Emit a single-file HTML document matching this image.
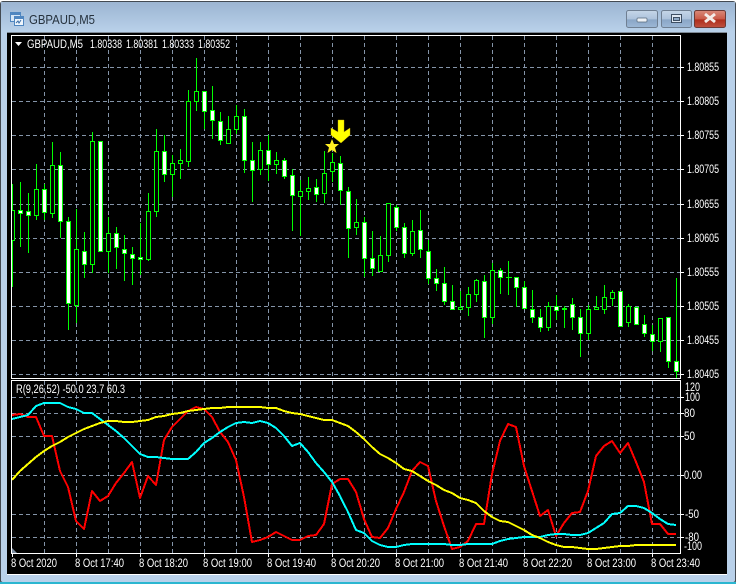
<!DOCTYPE html>
<html><head><meta charset="utf-8"><title>GBPAUD,M5</title>
<style>
html,body{margin:0;padding:0;width:738px;height:584px;overflow:hidden;background:#fff}
svg{display:block}
text{font-family:"Liberation Sans",sans-serif;font-size:11.5px;fill:#fff}
</style></head><body>
<svg width="738" height="584" viewBox="0 0 738 584" xmlns="http://www.w3.org/2000/svg">
<defs>
<linearGradient id="t" x1="0" y1="0" x2="0" y2="1"><stop offset="0" stop-color="#9cb5d2"/><stop offset="1" stop-color="#b9d1ea"/></linearGradient>
<linearGradient id="b" x1="0" y1="0" x2="0" y2="1"><stop offset="0" stop-color="#c6d6e8"/><stop offset=".5" stop-color="#adc3dc"/><stop offset=".55" stop-color="#8aa6c6"/><stop offset="1" stop-color="#9db8d6"/></linearGradient>
<linearGradient id="r" x1="0" y1="0" x2="0" y2="1"><stop offset="0" stop-color="#d98a7a"/><stop offset=".5" stop-color="#c95a48"/><stop offset=".55" stop-color="#ae2e1c"/><stop offset="1" stop-color="#bf5140"/></linearGradient>
<clipPath id="m"><rect x="12" y="36" width="668" height="342"/></clipPath>
<clipPath id="s"><rect x="12" y="381" width="668" height="172"/></clipPath>
</defs>
<rect width="738" height="584" fill="#fff"/>
<!-- window frame -->
<rect x="0" y="1" width="736" height="583" rx="3" fill="#434a52"/>
<rect x="1" y="2" width="734" height="580" rx="2" fill="#b9d1ea"/>
<rect x="1" y="2" width="734" height="30" fill="url(#t)"/>
<rect x="0" y="582" width="738" height="2" fill="#2bb6d0"/>
<rect x="736" y="0" width="2" height="584" fill="#fff"/>
<rect x="7" y="32" width="720" height="1" fill="#7f8a96"/>
<!-- title -->
<g shape-rendering="crispEdges">
<rect x="10.5" y="12.5" width="10" height="9" fill="#d6e6f6" stroke="#4f86c0"/>
<rect x="11" y="13" width="9" height="2" fill="#4f86c0"/>
<rect x="14.5" y="16.5" width="9" height="9" fill="#eef5fc" stroke="#4f86c0"/>
<rect x="15" y="17" width="8" height="2" fill="#4f86c0"/>
</g>
<path d="M16 23l2-2 1 2 2-3" fill="none" stroke="#3a6ea8" stroke-width="1"/>
<text x="29" y="24" textLength="66" lengthAdjust="spacingAndGlyphs" style="font-size:13px;fill:#26323e">GBPAUD,M5</text>
<!-- buttons -->
<rect x="626.5" y="10.5" width="31" height="17" rx="2" fill="url(#b)" stroke="#6f7f92"/>
<rect x="661.5" y="10.5" width="30" height="17" rx="2" fill="url(#b)" stroke="#6f7f92"/>
<rect x="694.5" y="10.5" width="31" height="17" rx="2" fill="url(#r)" stroke="#6b3a36"/>
<rect x="637" y="18" width="10" height="4" rx="1" fill="#eef2f6" stroke="#56687c" stroke-width=".7"/>
<rect x="671.5" y="14.5" width="10" height="8" fill="#dfe8f2" stroke="#3e4f63" stroke-width="1"/>
<rect x="673.5" y="17.5" width="6" height="3" fill="#8fa9c6" stroke="#3e4f63" stroke-width="1"/>
<path d="M705 14l10 8M715 14l-10 8" stroke="#f3ece8" stroke-width="3" fill="none"/>
<!-- chart -->
<rect x="7" y="33" width="720" height="541" fill="#000"/>
<rect x="7" y="574" width="720" height="1" fill="#fff"/>
<g shape-rendering="crispEdges">
<path d="M11.5 35V379M11 35.5H681M680.5 35V378M11 378.5H681M11 380.5H681M11.5 380V554M680.5 380V554M11 553.5H681" stroke="#fff" fill="none"/>
<!-- grid -->
<g stroke="#8494a8" stroke-dasharray="4 3" fill="none">
<path d="M12 67.5H680M12 101.5H680M12 135.5H680M12 169.5H680M12 204.5H680M12 238.5H680M12 272.5H680M12 306.5H680M12 340.5H680M12 374.5H680"/>
<path d="M12 397.5H680M12 413.5H680M12 436.5H680M12 475.5H680M12 514.5H680M12 537.5H680"/>
<path d="M44.5 36V378M76.5 36V378M108.5 36V378M140.5 36V378M172.5 36V378M204.5 36V378M236.5 36V378M268.5 36V378M300.5 36V378M332.5 36V378M364.5 36V378M396.5 36V378M428.5 36V378M460.5 36V378M492.5 36V378M524.5 36V378M556.5 36V378M588.5 36V378M620.5 36V378M652.5 36V378"/>
<path d="M44.5 381V553M76.5 381V553M108.5 381V553M140.5 381V553M172.5 381V553M204.5 381V553M236.5 381V553M268.5 381V553M300.5 381V553M332.5 381V553M364.5 381V553M396.5 381V553M428.5 381V553M460.5 381V553M492.5 381V553M524.5 381V553M556.5 381V553M588.5 381V553M620.5 381V553M652.5 381V553"/>
</g>
<!-- axis ticks -->
<path stroke="#fff" fill="none" d="M681 67.5h3M681 101.5h3M681 135.5h3M681 169.5h3M681 204.5h3M681 238.5h3M681 272.5h3M681 306.5h3M681 340.5h3M681 374.5h3M681 397.5h3M681 413.5h3M681 436.5h3M681 475.5h3M681 514.5h3M681 537.5h3M12.5 554v3M76.5 554v3M140.5 554v3M204.5 554v3M268.5 554v3M332.5 554v3M396.5 554v3M460.5 554v3M524.5 554v3M588.5 554v3M652.5 554v3"/>
<g clip-path="url(#m)">
<!-- wicks -->
<path stroke="#00ff00" fill="none" d="M12.5 184V287M20.5 182V247M28.5 193V253M36.5 164V220M44.5 184V220M52.5 142V218M60.5 152V238M68.5 217V330M76.5 209V323M84.5 232V278M92.5 132V273M100.5 141V251M108.5 217V273M116.5 227V269M124.5 235V281M132.5 247V285M140.5 223V275M148.5 193V261M156.5 129V217M164.5 135V182M172.5 155V197M180.5 149V179M188.5 90V167M196.5 58V111M204.5 91V129M212.5 86V139M220.5 112V145M228.5 116V143M236.5 105V134M244.5 109V173M252.5 142V202M260.5 142V175M268.5 135V181M276.5 152V174M284.5 158V179M292.5 169V231M300.5 180V236M308.5 177V200M316.5 179V202M324.5 151V203M332.5 153V182M340.5 156V205M348.5 187V258M356.5 199V235M364.5 217V277M372.5 231V276M380.5 236V271M388.5 203V262M396.5 205V231M404.5 223V258M412.5 220V256M420.5 210V258M428.5 240V284M436.5 269V291M444.5 267V305M452.5 285V310M460.5 291V309M468.5 287V316M476.5 279V302M484.5 275V338M492.5 263V324M500.5 268V294M508.5 261V295M516.5 277V307M524.5 281V309M532.5 290V323M540.5 309V332M548.5 302V331M556.5 295V320M564.5 306V328M572.5 298V330M580.5 309V357M588.5 305V340M596.5 296V309M604.5 285V314M612.5 290V306M620.5 291V326M628.5 304V327M636.5 307V325M644.5 315V337M652.5 325V351M660.5 318V352M668.5 317V368M676.5 278V378"/>
<!-- hollow bodies -->
<path stroke="#00ff00" fill="#000" d="M10.5 210.5h4v30h-4zM34.5 189.5h4v26h-4zM50.5 165.5h4v48h-4zM74.5 249.5h4v56h-4zM90.5 141.5h4v123h-4zM106.5 233.5h4v18h-4zM146.5 211.5h4v48h-4zM154.5 151.5h4v60h-4zM170.5 163.5h4v11h-4zM178.5 160.5h4v3h-4zM186.5 101.5h4v60h-4zM194.5 91.5h4v10h-4zM226.5 129.5h4v14h-4zM234.5 116.5h4v13h-4zM258.5 150.5h4v19h-4zM274.5 160.5h4v4h-4zM298.5 191.5h4v5h-4zM306.5 188.5h4v3h-4zM322.5 173.5h4v20h-4zM330.5 162.5h4v9h-4zM354.5 222.5h4v5h-4zM378.5 255.5h4v16h-4zM386.5 203.5h4v52h-4zM410.5 231.5h4v22h-4zM458.5 307.5h4v2h-4zM466.5 294.5h4v13h-4zM474.5 280.5h4v14h-4zM490.5 270.5h4v47h-4zM546.5 306.5h4v21h-4zM586.5 309.5h4v24h-4zM594.5 307.5h4v2h-4zM602.5 297.5h4v12h-4zM610.5 292.5h4v6h-4zM626.5 306.5h4v16h-4zM658.5 318.5h4v23h-4z"/>
<!-- filled bodies -->
<path stroke="#00ff00" fill="#fff" d="M18.5 210.5h4v3h-4zM26.5 211.5h4v4h-4zM42.5 189.5h4v23h-4zM58.5 165.5h4v56h-4zM66.5 221.5h4v82h-4zM82.5 251.5h4v13h-4zM98.5 141.5h4v110h-4zM114.5 233.5h4v14h-4zM122.5 249.5h4v4h-4zM130.5 254.5h4v4h-4zM138.5 257.5h4v2h-4zM162.5 151.5h4v23h-4zM202.5 91.5h4v20h-4zM210.5 110.5h4v10h-4zM218.5 121.5h4v19h-4zM242.5 116.5h4v44h-4zM250.5 160.5h4v10h-4zM266.5 150.5h4v14h-4zM282.5 160.5h4v16h-4zM290.5 175.5h4v20h-4zM314.5 187.5h4v7h-4zM338.5 163.5h4v27h-4zM346.5 191.5h4v37h-4zM362.5 222.5h4v36h-4zM370.5 258.5h4v10h-4zM394.5 207.5h4v20h-4zM402.5 227.5h4v26h-4zM418.5 230.5h4v19h-4zM426.5 251.5h4v27h-4zM434.5 278.5h4v5h-4zM442.5 283.5h4v18h-4zM450.5 301.5h4v8h-4zM482.5 281.5h4v36h-4zM498.5 270.5h4v7h-4zM514.5 277.5h4v10h-4zM522.5 287.5h4v21h-4zM530.5 309.5h4v8h-4zM538.5 317.5h4v10h-4zM554.5 306.5h4v4h-4zM562.5 308.5h4v1h-4zM570.5 304.5h4v13h-4zM578.5 317.5h4v16h-4zM618.5 291.5h4v35h-4zM634.5 307.5h4v17h-4zM642.5 324.5h4v9h-4zM650.5 334.5h4v7h-4zM666.5 317.5h4v44h-4zM674.5 361.5h4v10h-4z"/>
<path stroke="#00ff00" d="M506 277.5h6"/>
</g>
</g>
<!-- arrow & star -->
<path d="M338 120h6v12l6 -4v7l-9 8-10-8v-7l7 4z" fill="#ffff00" stroke="#c9a800" stroke-width=".4"/>
<path d="M332 139l2 5h5l-4 3.500 1.500 5.500-4.500-3-4.500 3 1.500-5.500-4-3.500h5z" fill="#ffee22"/>
<!-- indicator -->
<g clip-path="url(#s)" fill="none" stroke-width="2" stroke-linejoin="round" shape-rendering="crispEdges">
<polyline stroke="#ff0000" points="12,415 20,414 28,417 36,417 44,436 52,436 60,471 68,487 76,521 84,529 92,491 100,501 108,496 116,483 124,473 132,462 140,498 148,476 156,485 164,440 172,427 180,419 188,411 196,407 204,409 212,417 220,432 228,442 236,460 244,497 252,542 260,540 268,537 276,532 284,536 292,540 300,540 308,536 316,535 324,524 332,484 340,479 348,479 356,492 364,519 372,537 380,538 388,528 396,509 404,492 412,471 420,462 428,466 436,501 444,526 452,549 460,547 468,541 476,524 484,524 492,474 500,441 508,424 516,427 524,466 532,491 540,516 548,510 556,536 564,523 572,513 580,512 588,491 596,456 604,446 612,441 620,453 628,443 636,462 644,482 652,524 660,524 668,534 676,534"/>
<polyline stroke="#00ffff" points="12,419 20,417 28,415 36,406 44,403 52,403 60,403 68,407 76,409 84,413 92,413 100,419 108,425 116,431 124,438 132,446 140,454 148,457 156,457 164,458 172,459 180,459 188,459 196,452 204,443 212,438 220,432 228,427 236,423 244,422 252,423 260,421 268,423 276,428 284,436 292,446 300,443 308,452 316,463 324,472 332,482 340,496 348,512 356,530 364,533 372,541 380,545 388,547 396,547 404,545 412,544 420,544 428,544 436,544 444,544 452,545 460,545 468,544 476,544 484,544 492,544 500,541 508,539 516,538 524,537 532,537 540,537 548,535 556,534 564,534 572,535 580,535 588,533 596,528 604,523 612,514 620,513 628,506 636,506 644,508 652,513 660,519 668,524 676,525"/>
<polyline stroke="#ffff00" points="12,480 20,471 28,464 36,457 44,451 52,446 60,442 68,437 76,433 84,429 92,426 100,423 108,421 116,421 124,422 132,422 140,421 148,420 156,417 164,416 172,414 180,413 188,411 196,410 204,409 212,408 220,408 228,407 236,407 244,407 252,407 260,407 268,408 276,408 284,411 292,413 300,414 308,416 316,418 324,420 332,420 340,423 348,426 356,432 364,439 372,447 380,454 388,458 396,463 404,469 412,471 420,476 428,481 436,485 444,490 452,493 460,498 468,500 476,503 484,511 492,517 500,521 508,522 516,526 524,530 532,535 540,538 548,542 556,545 564,547 572,547 580,548 588,549 596,549 604,548 612,547 620,546 628,546 636,545 644,545 652,545 660,545 668,545 676,545"/>
</g>
<path d="M12 548l5 5h-5z" fill="#8090a3"/>
<!-- header text -->
<path d="M15 42h7l-3.500 4z" fill="#fff"/>
<text x="27" y="48" textLength="56" lengthAdjust="spacingAndGlyphs">GBPAUD,M5</text>
<text x="90" y="48" textLength="32" lengthAdjust="spacingAndGlyphs">1.80338</text>
<text x="126" y="48" textLength="32" lengthAdjust="spacingAndGlyphs">1.80381</text>
<text x="162" y="48" textLength="32" lengthAdjust="spacingAndGlyphs">1.80333</text>
<text x="198" y="48" textLength="32" lengthAdjust="spacingAndGlyphs">1.80352</text>
<text x="16" y="393" textLength="109" lengthAdjust="spacingAndGlyphs">R(9,26,52) -50.0 23.7 60.3</text>
<!-- price labels -->
<g>
<text x="687" y="71" textLength="32" lengthAdjust="spacingAndGlyphs">1.80855</text>
<text x="687" y="105" textLength="32" lengthAdjust="spacingAndGlyphs">1.80805</text>
<text x="687" y="139" textLength="32" lengthAdjust="spacingAndGlyphs">1.80755</text>
<text x="687" y="173" textLength="32" lengthAdjust="spacingAndGlyphs">1.80705</text>
<text x="687" y="208" textLength="32" lengthAdjust="spacingAndGlyphs">1.80655</text>
<text x="687" y="242" textLength="32" lengthAdjust="spacingAndGlyphs">1.80605</text>
<text x="687" y="276" textLength="32" lengthAdjust="spacingAndGlyphs">1.80555</text>
<text x="687" y="310" textLength="32" lengthAdjust="spacingAndGlyphs">1.80505</text>
<text x="687" y="344" textLength="32" lengthAdjust="spacingAndGlyphs">1.80455</text>
<text x="687" y="378" textLength="32" lengthAdjust="spacingAndGlyphs">1.80405</text>
<text x="685" y="391" textLength="15" lengthAdjust="spacingAndGlyphs">120</text>
<text x="685" y="401" textLength="15" lengthAdjust="spacingAndGlyphs">100</text>
<text x="684" y="417" textLength="11" lengthAdjust="spacingAndGlyphs">80</text>
<text x="684" y="440" textLength="11" lengthAdjust="spacingAndGlyphs">50</text>
<text x="684" y="479" textLength="18" lengthAdjust="spacingAndGlyphs">0.00</text>
<text x="685" y="518" textLength="14" lengthAdjust="spacingAndGlyphs">-50</text>
<text x="685" y="541" textLength="14" lengthAdjust="spacingAndGlyphs">-80</text>
<text x="684" y="550" textLength="18" lengthAdjust="spacingAndGlyphs">-100</text>
</g>
<!-- time labels -->
<g>
<text x="11" y="567" textLength="46" lengthAdjust="spacingAndGlyphs">8 Oct 2020</text>
<text x="75" y="567" textLength="49" lengthAdjust="spacingAndGlyphs">8 Oct 17:40</text>
<text x="139" y="567" textLength="49" lengthAdjust="spacingAndGlyphs">8 Oct 18:20</text>
<text x="203" y="567" textLength="49" lengthAdjust="spacingAndGlyphs">8 Oct 19:00</text>
<text x="267" y="567" textLength="49" lengthAdjust="spacingAndGlyphs">8 Oct 19:40</text>
<text x="331" y="567" textLength="49" lengthAdjust="spacingAndGlyphs">8 Oct 20:20</text>
<text x="395" y="567" textLength="49" lengthAdjust="spacingAndGlyphs">8 Oct 21:00</text>
<text x="459" y="567" textLength="49" lengthAdjust="spacingAndGlyphs">8 Oct 21:40</text>
<text x="523" y="567" textLength="49" lengthAdjust="spacingAndGlyphs">8 Oct 22:20</text>
<text x="587" y="567" textLength="49" lengthAdjust="spacingAndGlyphs">8 Oct 23:00</text>
<text x="651" y="567" textLength="49" lengthAdjust="spacingAndGlyphs">8 Oct 23:40</text>
</g>
</svg>
</body></html>
